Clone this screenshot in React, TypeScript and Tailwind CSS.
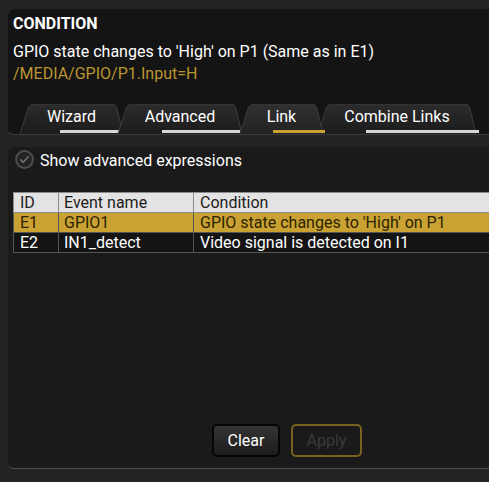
import React from "react";

const tabs = [
    { name: "Wizard", w: 103, ml: 0, ul: [40, 68], active: false },
    { name: "Advanced", w: 124, ml: -5, ul: [44, 78], active: false },
    { name: "Link", w: 83, ml: -2, ul: [33, 52], active: true },
    { name: "Combine Links", w: 158, ml: -5, ul: [48, 113], active: false },
];

const rows = [
    { id: "E1", name: "GPIO1", cond: "GPIO state changes to 'High' on P1", selected: true },
    { id: "E2", name: "IN1_detect", cond: "Video signal is detected on I1", selected: false },
];

function TabShape({ w, active }: { w: number; active: boolean }) {
    const h = 30;
    const d = `M0,${h} L8,5 Q9.5,0 15,0 L${w - 12},0 Q${w - 7},0 ${w - 6},5 L${w},${h} Z`;
    const gid = active ? "tabA" : "tabI";
    return (
        <svg className="absolute inset-0" width={w} height={h} viewBox={`0 0 ${w} ${h}`}>
            <defs>
                <linearGradient id={gid} x1="0" y1="0" x2="0" y2="1">
                    <stop offset="0" stopColor={active ? "#313131" : "#2c2c2c"} />
                    <stop offset="1" stopColor={active ? "#222222" : "#1b1b1b"} />
                </linearGradient>
            </defs>
            <path d={d} fill={`url(#${gid})`} stroke="#3d3d3d" strokeWidth="1" />
            <path d={`M0.5,${h} L${w - 0.5},${h}`} stroke="#141414" strokeWidth="1" />
        </svg>
    );
}

export default function App() {
    return (
        <div className="w-[489px] h-[482px] bg-[#232323] pt-[9px] pl-2 overflow-hidden font-[Roboto,sans-serif] text-[16px]">
            {/* condition panel */}
            <div className="h-[126px] bg-[#141414] rounded-tl-lg rounded-bl-md border-b border-[#3a3a3a] flex flex-col">
                <div className="pl-[5px] pt-[4px] font-bold text-white leading-[21px]">CONDITION</div>
                <div className="pl-[5px] mt-[7px] text-white leading-[22px]">GPIO state changes to 'High' on P1 (Same as in E1)</div>
                <div className="pl-[5px] text-[#bb9530] leading-[22px]">/MEDIA/GPIO/P1.Input=H</div>
                <div className="mt-auto flex pl-3 h-[30px]">
                    {tabs.map(tab => (
                        <div
                            key={tab.name}
                            className={`relative h-[30px] shrink-0 ${tab.active ? "z-10" : ""}`}
                            style={{ width: tab.w, marginLeft: tab.ml }}
                        >
                            <TabShape w={tab.w} active={tab.active} />
                            <div className="relative pt-[2px] text-center text-white leading-[21px]">{tab.name}</div>
                            <div
                                className={`absolute bottom-[1px] h-[3px] ${tab.active ? "bg-[#c9a032]" : "bg-[#d6d6d6]"}`}
                                style={{ left: tab.ul[0], width: tab.ul[1] }}
                            />
                        </div>
                    ))}
                </div>
            </div>

            {/* link panel */}
            <div className="mt-3 h-[322px] bg-[#1a1a1a] rounded-l-md border-b border-[#4d4d4d] flex flex-col overflow-hidden">
                <div className="flex items-start pt-[3px] pl-[7px]">
                    <svg width="19" height="19" viewBox="0 0 19 19">
                        <circle cx="9.5" cy="9.5" r="8.4" fill="#222222" stroke="#4e4e4e" strokeWidth="2" />
                        <path d="M5.8 9.9 L8.3 12.3 L13.2 6.8" fill="none" stroke="#6e6e6e" strokeWidth="1.7" strokeLinecap="round" strokeLinejoin="round" />
                    </svg>
                    <span className="ml-[6px] pt-[1px] text-white leading-[19px]">Show advanced expressions</span>
                </div>

                <table className="mt-[22px] ml-[5px] w-[560px] border-collapse border border-[#555] leading-[19px]">
                    <tbody>
                        <tr className="bg-[#e3e3e3] text-[#1c1c1c]">
                            <td className="w-[45px] border border-[#8c8c8c] pl-[6px]">ID</td>
                            <td className="w-[135px] border border-[#8c8c8c] pl-[5px]">Event name</td>
                            <td className="border border-[#8c8c8c] pl-[6px]">Condition</td>
                        </tr>
                        {rows.map(row => (
                            <tr
                                key={row.id}
                                className={row.selected ? "bg-[#c9a233] text-[#2c2200]" : "bg-[#141414] text-white"}
                            >
                                <td className="border border-[#555] pl-[6px]">{row.id}</td>
                                <td className="border border-[#555] pl-[5px]">{row.name}</td>
                                <td className="border border-[#555] pl-[6px]">{row.cond}</td>
                            </tr>
                        ))}
                    </tbody>
                </table>

                <div className="mt-auto mb-[11px] ml-[204px] flex gap-[11px]">
                    <button className="w-[68px] h-[33px] rounded-[5px] border-2 border-[#050505] bg-gradient-to-b from-[#353535] to-[#1c1c1c] text-white">
                        Clear
                    </button>
                    <button className="w-[71px] h-[33px] rounded-[5px] border-2 border-[#7a6120] bg-[#1a1a1a] text-[#3a3a3a]">
                        Apply
                    </button>
                </div>
            </div>
        </div>
    );
}
